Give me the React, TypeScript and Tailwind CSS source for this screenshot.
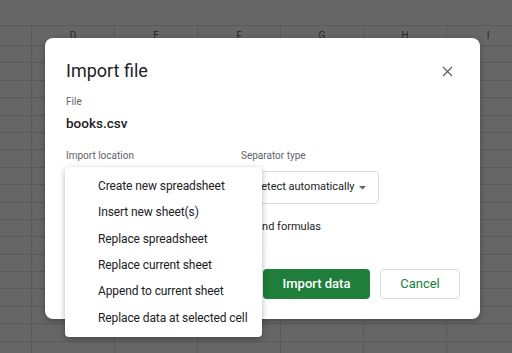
import React from "react";

const cols = ["D", "E", "F", "G", "H", "I"];
const rows = Array.from({ length: 18 }, (_, i) => i);

const menuItems = [
  "Create new spreadsheet",
  "Insert new sheet(s)",
  "Replace spreadsheet",
  "Replace current sheet",
  "Append to current sheet",
  "Replace data at selected cell",
];

export default function App() {
  return (
    <div
      className="relative w-[512px] h-[353px] overflow-hidden bg-[#666666]"
      style={{ fontFamily: "Roboto, 'Liberation Sans', sans-serif" }}
    >
      {/* spreadsheet behind the overlay */}
      <div className="flex flex-col">
        <div className="h-[26px] border-b border-[#5a5a5a]" />
        <div className="flex h-[20px] border-b border-[#5a5a5a]">
          <div className="w-[32px] shrink-0 border-r border-[#5a5a5a]" />
          {cols.map((c) => (
            <div
              key={c}
              className="w-[83px] shrink-0 border-r border-[#5a5a5a] flex items-center justify-center text-[10px] text-[#262626]"
            >
              {c}
            </div>
          ))}
        </div>
        {rows.map((r) => (
          <div key={r} className="flex h-[17.4px] border-b border-[#5a5a5a]">
            <div className="w-[32px] shrink-0 border-r border-[#5a5a5a]" />
            {cols.map((c) => (
              <div key={c} className="w-[83px] shrink-0 border-r border-[#5a5a5a]" />
            ))}
          </div>
        ))}
      </div>

      {/* dialog */}
      <div className="absolute left-[45px] top-[38px] w-[435px] h-[281px] bg-white rounded-[8px] shadow-[0_2px_6px_rgba(0,0,0,0.3)] flex flex-col pl-[21px] pr-[20px] pt-[19px] pb-[20px]">
        <div className="flex items-center justify-between">
          <div className="text-[18px] leading-[28px] text-[#202124]">Import file</div>
          <button className="w-[24px] h-[24px] flex items-center justify-center mr-[1px]">
            <svg width="11" height="11" viewBox="0 0 11 11">
              <path d="M1 1 L10 10 M10 1 L1 10" stroke="#5f6368" strokeWidth="1.3" />
            </svg>
          </button>
        </div>
        <div className="mt-[9px] text-[10px] leading-[16px] text-[#5f6368]">File</div>
        <div className="mt-[3px] text-[13.5px] leading-[20px] font-medium text-[#202124]">books.csv</div>
        <div className="mt-[15px] flex gap-[12px]">
          <div className="w-[163px] flex flex-col">
            <div className="text-[10px] leading-[16px] text-[#5f6368]">Import location</div>
            <div className="mt-[7px] h-[33px] border border-[#dadce0] rounded-[4px] flex items-center pl-[12px] text-[11px] text-[#202124]">
              Replace spreadsheet
            </div>
          </div>
          <div className="flex flex-col">
            <div className="text-[10px] leading-[16px] text-[#5f6368]">Separator type</div>
            <div className="mt-[7px] h-[33px] w-[138px] border border-[#dadce0] rounded-[4px] flex items-center pl-[12px] pr-[12px] justify-between text-[11px] text-[#202124] whitespace-nowrap">
              <span>Detect automatically</span>
              <svg width="7" height="4" viewBox="0 0 7 4">
                <path d="M0 0 L7 0 L3.5 3.5 Z" fill="#5f6368" />
              </svg>
            </div>
          </div>
        </div>
        <div className="mt-[13px] flex items-center gap-[12px] h-[20px]">
          <div className="w-[16px] h-[16px] border-2 border-[#5f6368] rounded-[2px] shrink-0" />
          <div className="w-[227px] overflow-hidden flex justify-end whitespace-nowrap text-[11px] leading-[20px] text-[#202124]">
            <span className="shrink-0">Convert text to numbers, dates, and formulas</span>
          </div>
        </div>
        <div className="mt-auto flex justify-end gap-[10px]">
          <button className="w-[107px] h-[30px] rounded-[4px] bg-[#1e7e3a] text-white text-[13px] font-medium">
            Import data
          </button>
          <button className="w-[80px] h-[30px] rounded-[4px] border border-[#dadce0] bg-white text-[#188038] text-[13px]">
            Cancel
          </button>
        </div>
      </div>

      {/* dropdown menu */}
      <div className="absolute left-[65px] top-[167px] w-[197px] bg-white rounded-[4px] shadow-[0_2px_6px_rgba(0,0,0,0.3)] py-[6px] flex flex-col">
        {menuItems.map((m) => (
          <div
            key={m}
            className="h-[26.3px] flex items-center pl-[33px] text-[12px] tracking-[-0.1px] text-[#202124] whitespace-nowrap"
          >
            {m}
          </div>
        ))}
      </div>
    </div>
  );
}
